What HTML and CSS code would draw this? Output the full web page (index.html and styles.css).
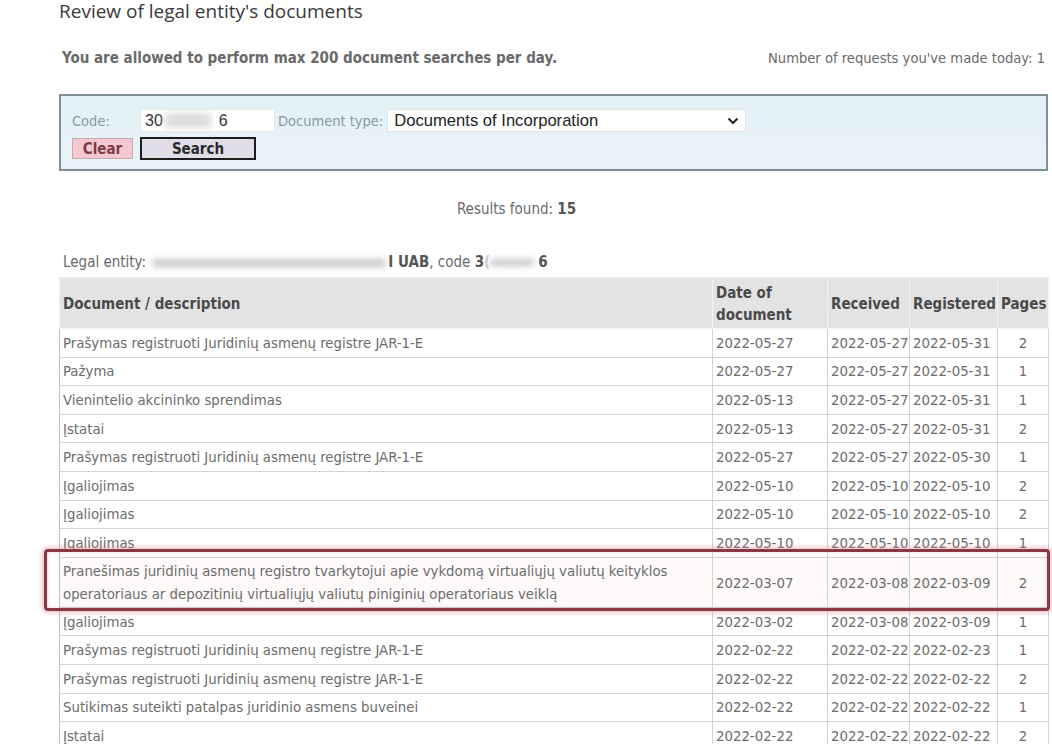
FILE: index.html
```html
<!DOCTYPE html>
<html>
<head>
<meta charset="utf-8">
<link rel="stylesheet" href="styles.css">
</head>
<body>
<div class="page">
  <h1 class="title">Review of legal entity's documents</h1>
  <div class="limits">
    <span class="limit-msg">You are allowed to perform max 200 document searches per day.</span>
    <span class="limit-count">Number of requests you've made today: 1</span>
  </div>
  <form class="search">
    <div class="search-row">
      <label class="lbl code-lbl">Code:</label>
      <div class="code-input"><span>30</span><span class="blur blur-code"></span><span>6</span></div>
      <label class="lbl">Document type:</label>
      <div class="select"><span>Documents of Incorporation</span>
        <svg class="chev" width="12" height="8" viewBox="0 0 12 8"><path d="M1.5 1.5 L6 6 L10.5 1.5" fill="none" stroke="#222" stroke-width="2"/></svg>
      </div>
    </div>
    <div class="search-row buttons">
      <span class="btn btn-clear">Clear</span>
      <span class="btn btn-search">Search</span>
    </div>
  </form>
  <div class="results">Results found: <b>15</b></div>
  <div class="entity">Legal entity: <span class="blur blur-name"></span><b>I UAB</b>, code <b>3<span class="faint">(</span></b><span class="blur blur-code2"></span><b>6</b></div>
  <div class="table-wrap">
  <table class="docs">
    <colgroup>
      <col class="c-doc"><col class="c-date"><col class="c-rec"><col class="c-reg"><col class="c-pages">
    </colgroup>
    <thead>
      <tr><th class="th-doc">Document / description</th><th>Date of document</th><th>Received</th><th>Registered</th><th>Pages</th></tr>
    </thead>
    <tbody>
      <tr><td>Prašymas registruoti Juridinių asmenų registre JAR-1-E</td><td>2022-05-27</td><td>2022-05-27</td><td>2022-05-31</td><td class="pg">2</td></tr>
      <tr><td>Pažyma</td><td>2022-05-27</td><td>2022-05-27</td><td>2022-05-31</td><td class="pg">1</td></tr>
      <tr><td>Vienintelio akcininko sprendimas</td><td>2022-05-13</td><td>2022-05-27</td><td>2022-05-31</td><td class="pg">1</td></tr>
      <tr><td>Įstatai</td><td>2022-05-13</td><td>2022-05-27</td><td>2022-05-31</td><td class="pg">2</td></tr>
      <tr><td>Prašymas registruoti Juridinių asmenų registre JAR-1-E</td><td>2022-05-27</td><td>2022-05-27</td><td>2022-05-30</td><td class="pg">1</td></tr>
      <tr><td>Įgaliojimas</td><td>2022-05-10</td><td>2022-05-10</td><td>2022-05-10</td><td class="pg">2</td></tr>
      <tr><td>Įgaliojimas</td><td>2022-05-10</td><td>2022-05-10</td><td>2022-05-10</td><td class="pg">2</td></tr>
      <tr class="clipped"><td>Įgaliojimas</td><td>2022-05-10</td><td>2022-05-10</td><td>2022-05-10</td><td class="pg">1</td></tr>
      <tr class="marked"><td class="wrap">Pranešimas juridinių asmenų registro tvarkytojui apie vykdomą virtualiųjų valiutų keityklos operatoriaus ar depozitinių virtualiųjų valiutų piniginių operatoriaus veiklą</td><td>2022-03-07</td><td>2022-03-08</td><td>2022-03-09</td><td class="pg">2</td></tr>
      <tr><td>Įgaliojimas</td><td>2022-03-02</td><td>2022-03-08</td><td>2022-03-09</td><td class="pg">1</td></tr>
      <tr><td>Prašymas registruoti Juridinių asmenų registre JAR-1-E</td><td>2022-02-22</td><td>2022-02-22</td><td>2022-02-23</td><td class="pg">1</td></tr>
      <tr><td>Prašymas registruoti Juridinių asmenų registre JAR-1-E</td><td>2022-02-22</td><td>2022-02-22</td><td>2022-02-22</td><td class="pg">2</td></tr>
      <tr><td>Sutikimas suteikti patalpas juridinio asmens buveinei</td><td>2022-02-22</td><td>2022-02-22</td><td>2022-02-22</td><td class="pg">1</td></tr>
      <tr><td>Įstatai</td><td>2022-02-22</td><td>2022-02-22</td><td>2022-02-22</td><td class="pg">2</td></tr>
    </tbody>
  </table>
  <div class="highlight"></div>
  </div>
</div>
</body>
</html>
```

FILE: styles.css
```css
html, body {
  margin: 0;
  padding: 0;
  background: #ffffff;
  overflow: hidden;
}
body {
  width: 1052px;
  height: 744px;
  font-family: "DejaVu Sans Condensed", "DejaVu Sans", sans-serif;
  color: #5e5e5e;
}
.page {
  padding: 0 4px 0 59px;
}
.title {
  margin: 0;
  height: 24px;
  font-family: "Open Sans", sans-serif;
  font-weight: 400;
  font-size: 19px;
  line-height: 22px;
  color: #3a3a3a;
}
.limits {
  display: flex;
  justify-content: space-between;
  align-items: baseline;
  padding: 25px 3px 0 3px;
  height: 25px;
}
.limit-msg {
  font-weight: bold;
  font-size: 15px;
  color: #6a6a6a;
}
.limit-count {
  font-size: 14.6px;
  color: #6a6a6a;
}
.search {
  margin-top: 20px;
  height: 77px;
  box-sizing: border-box;
  border: 2px solid #7d9097;
  background: linear-gradient(180deg, #e3f1f6 0%, #e8f3f7 100%);
  padding: 13px 11px 0 11px;
  display: flex;
  flex-direction: column;
  gap: 5px;
}
.search-row {
  display: flex;
  align-items: center;
  height: 23px;
}
.lbl {
  font-size: 14.5px;
  color: #8a9aa2;
  margin-right: 4px;
}
.code-lbl {
  width: 64px;
  margin-right: 4px;
}
.code-input {
  width: 135px;
  height: 23px;
  box-sizing: border-box;
  background: #fff;
  border: 1px solid #e2ecef;
  display: flex;
  align-items: center;
  padding-left: 4px;
  font-size: 16px;
  color: #333;
  font-family: "Liberation Sans", sans-serif;
  margin-right: 3px;
}
.blur {
  display: inline-block;
  background: #d6d6d6;
  filter: blur(3px);
  border-radius: 4px;
  vertical-align: middle;
}
.blur-code {
  width: 46px;
  height: 15px;
  margin: 0 8px 0 2px;
  background: #dcdcdc;
}
.select {
  width: 359px;
  height: 23px;
  box-sizing: border-box;
  background: #fff;
  border: 1px solid #dde6ea;
  display: flex;
  align-items: center;
  justify-content: space-between;
  padding: 0 6px 0 6px;
  font-family: "Liberation Sans", sans-serif;
  font-size: 16.6px;
  color: #222;
}
.buttons {
  gap: 7px;
}
.btn {
  font-weight: bold;
  font-size: 15px;
  display: flex;
  align-items: center;
  justify-content: center;
  box-sizing: border-box;
}
.btn-clear {
  width: 61px;
  height: 21px;
  background: #f3c8d0;
  border: 1px solid #c9a8ae;
  color: #7e3a46;
}
.btn-search {
  width: 116px;
  height: 23px;
  background: #e1dde9;
  border: 2px solid #1d1d1d;
  color: #2a2a2a;
}
.results {
  text-align: center;
  font-size: 15px;
  color: #6a6a6a;
  margin-top: 29px;
  padding-right: 74px;
}
.results b {
  color: #555;
}
.entity {
  margin-top: 34px;
  padding-left: 4px;
  font-size: 15px;
  color: #6a6a6a;
  height: 20px;
  line-height: 20px;
  white-space: nowrap;
}
.entity b {
  color: #555;
}
.blur-name {
  width: 234px;
  height: 8px;
  margin: 0 2px 0 2px;
  background: #c9c9c9;
}
.blur-code2 {
  width: 44px;
  height: 7px;
  margin: 0 4px 0 0;
  background: #c6c6c6;
}
.faint {
  color: #ccc;
}
.table-wrap {
  position: relative;
  margin-top: 5px;
  width: 989px;
}
.docs {
  width: 989px;
  border-collapse: collapse;
  table-layout: fixed;
  font-size: 14.8px;
  color: #6c6c6c;
}
.c-doc { width: 653px; }
.c-date { width: 115px; }
.c-rec { width: 82px; }
.c-reg { width: 88px; }
.c-pages { width: 51px; }
.docs th {
  background: #e3e3e3;
  border: 1px solid #f4f4f4;
  border-top: 2px solid #e9e9e9;
  text-align: left;
  font-weight: bold;
  font-size: 15px;
  color: #4a4a4a;
  padding: 1px 3px;
  height: 47px;
  line-height: 22px;
  vertical-align: middle;
}
.docs td {
  border: 1px solid #d3d3d3;
  padding: 0 3px;
  height: 27.6px;
  line-height: 20px;
  vertical-align: middle;
  white-space: nowrap;
  overflow: hidden;
}
.docs tr.marked td {
  height: 49px;
  line-height: 23px;
  background: #fefafa;
}
.docs tr.marked td.wrap {
  white-space: normal;
}
.docs td.pg {
  text-align: center;
}
.docs tr td:first-child {
  border-left: 1px solid #bdbdbd;
}
.highlight {
  position: absolute;
  left: -15px;
  top: 272px;
  width: 1006px;
  height: 62px;
  box-sizing: border-box;
  border: 3px solid #8a3944;
  border-radius: 4px;
  box-shadow: 0 0 4px 2px rgba(220, 120, 130, 0.45), inset 0 0 3px rgba(220, 120, 130, 0.4);
  pointer-events: none;
}
```
